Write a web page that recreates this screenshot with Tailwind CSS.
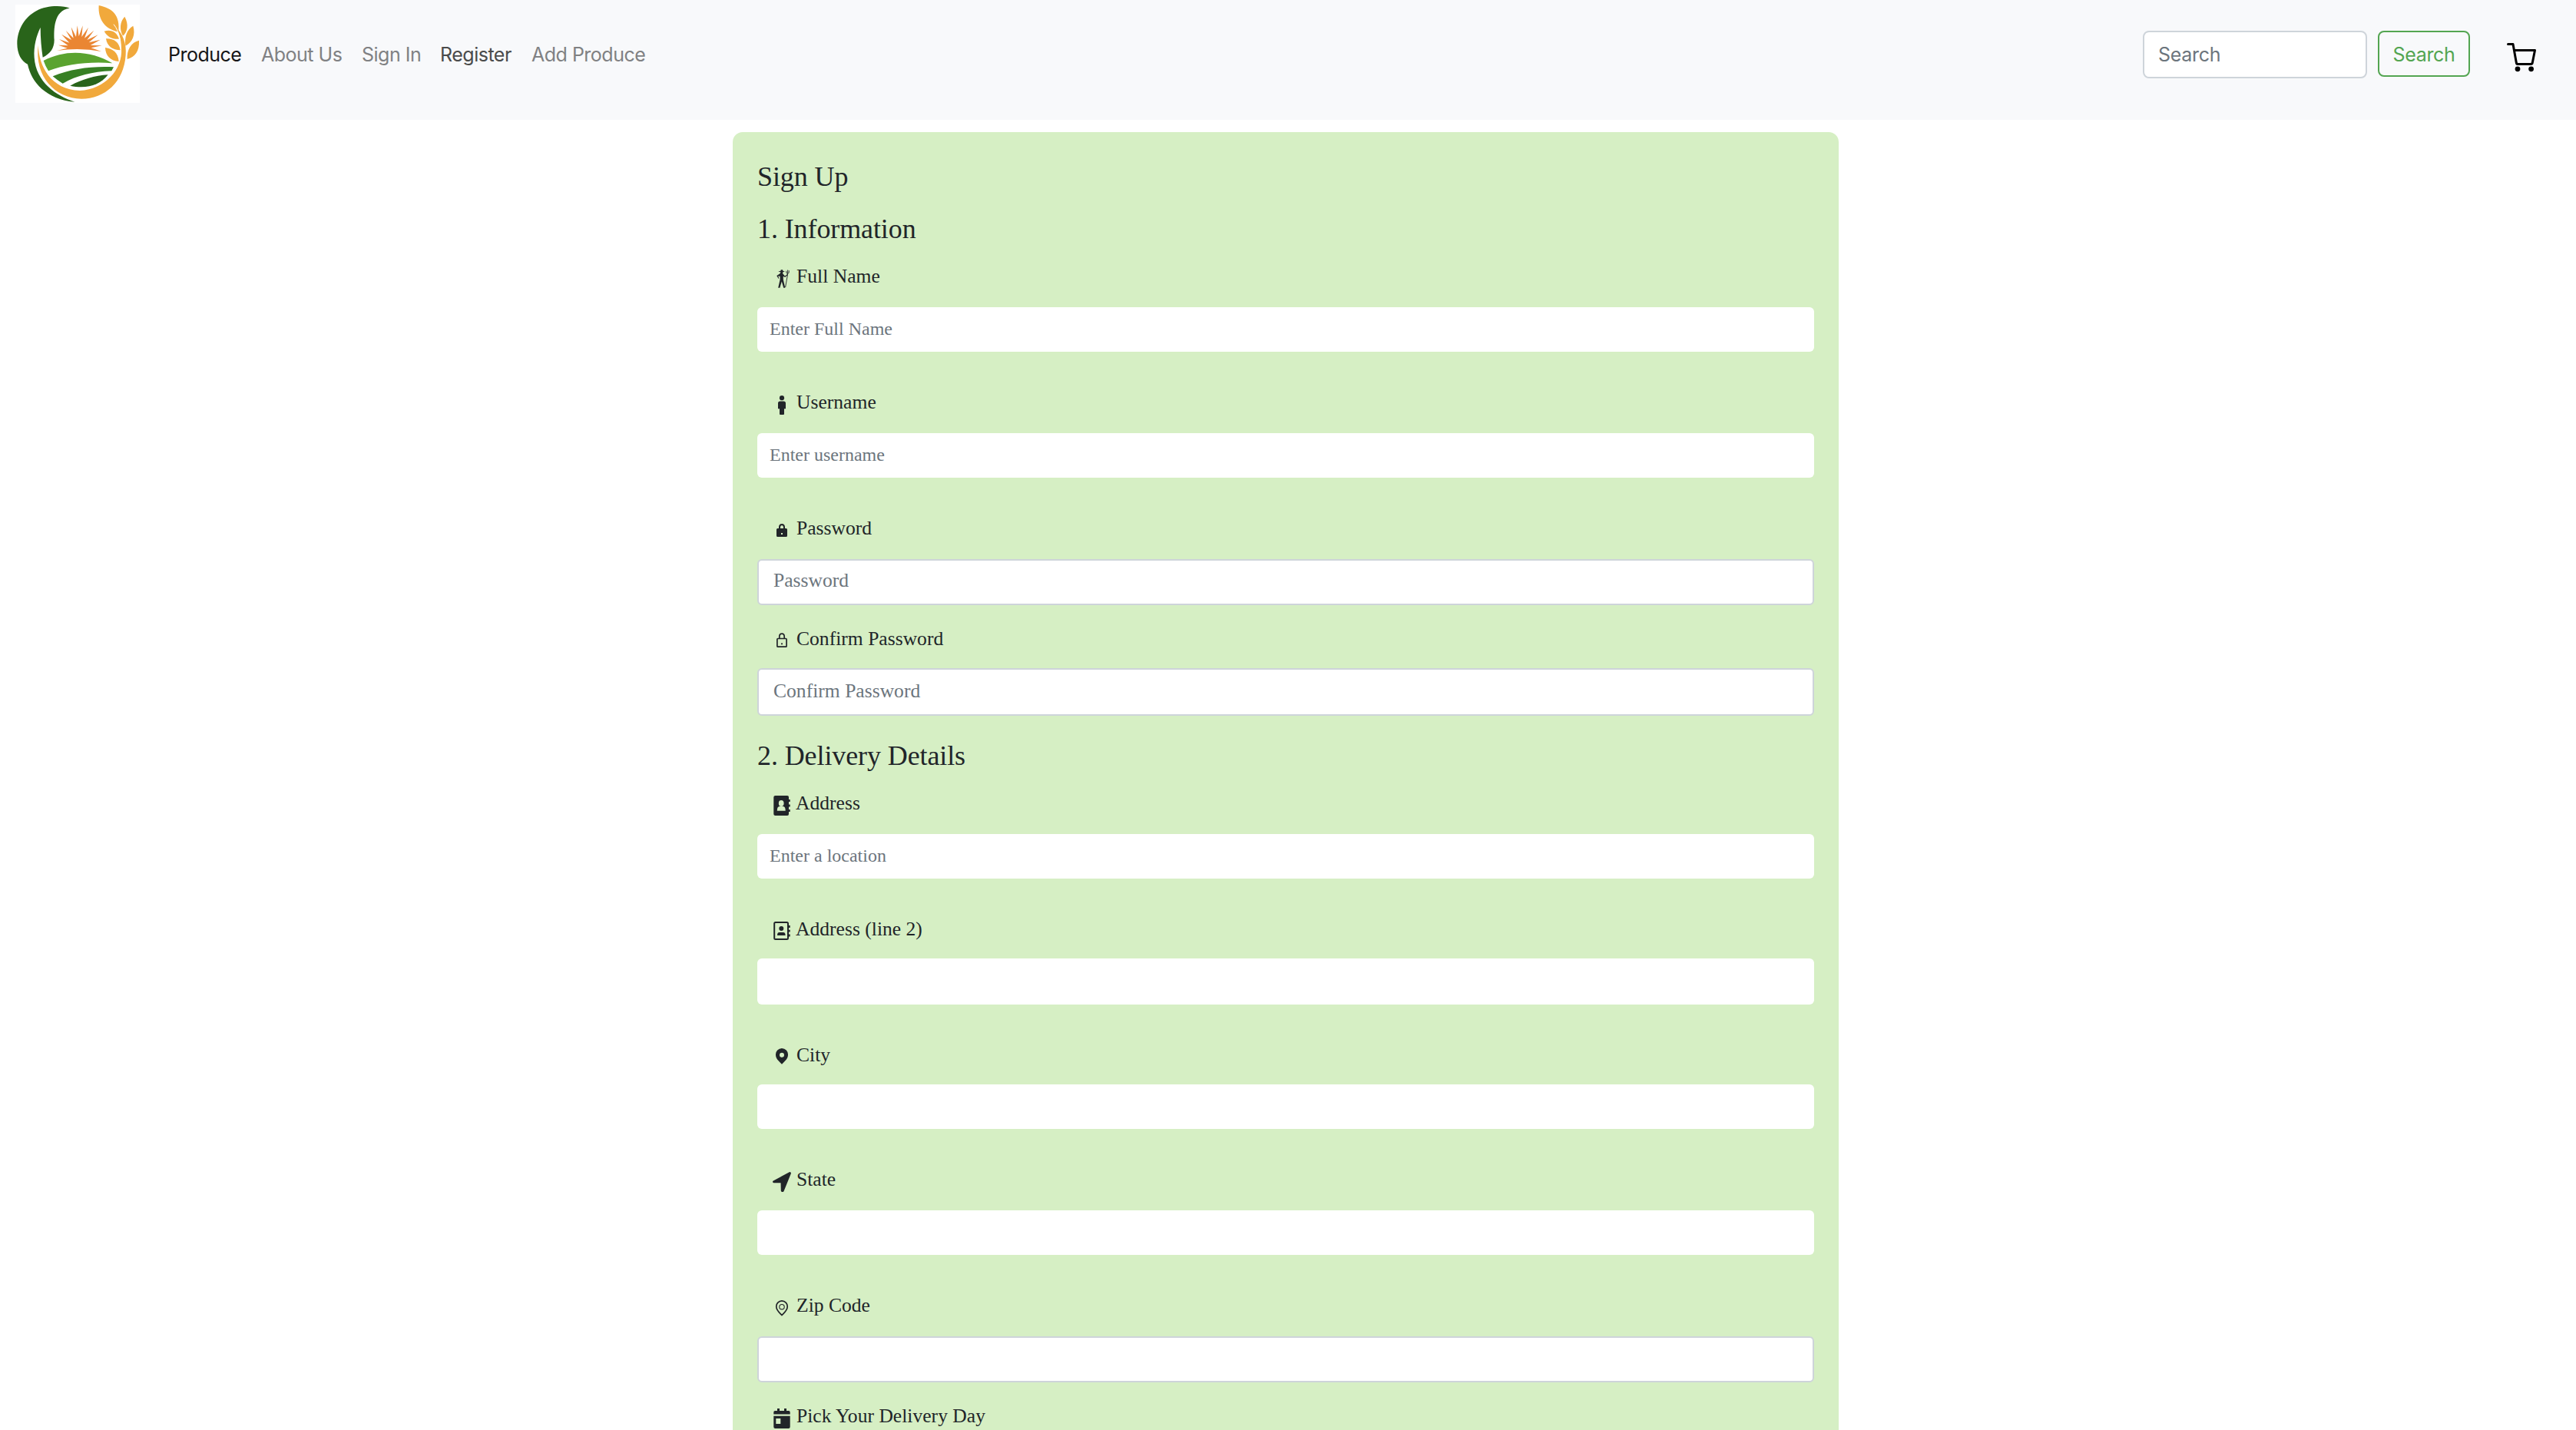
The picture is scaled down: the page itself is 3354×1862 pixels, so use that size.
<!DOCTYPE html>
<html lang="en">
<head>
<meta charset="utf-8">
<title>Sign Up</title>
<script src="https://cdn.jsdelivr.net/npm/@tailwindcss/browser@4"></script>
</head>
<body class="bg-white text-[#212529] w-[3354px] h-[1862px] overflow-hidden">
<header class="h-[156px] bg-[#f8f9fb] flex items-start pl-5 font-[Inter,sans-serif] text-[25px] leading-[38px] tracking-[-0.5px]">
  <svg class="w-[162px] h-[128px] mt-[6px] shrink-0" viewBox="60 18 486 384">
    <rect x="60" y="18" width="486" height="384" fill="#fff"/>
    <path fill="#29641a" d="M272 32C246 20 180 20 143 42C100 65 68 110 67 170C67 210 84 240 108 251C122 320 180 388 292 398C220 375 140 320 134 225C131 180 142 140 158 107C158 150 162 190 167 224C195 210 212 190 212 155C211 120 208 40 272 32Z"/>
    <path fill="#f1a93c" d="M149 176C152 260 200 350 312 354C410 350 480 270 474 190C474 150 462 120 448 101C480 130 495 170 491 215C484 320 410 386 318 386C215 384 135 300 149 176Z"/>
    <path fill="#f1a93c" d="M386 21C440 32 470 60 463 124C410 115 382 75 386 21ZM487 65C504 95 498 125 480 140C466 115 468 85 487 65ZM520 101C530 135 518 165 490 179C486 145 495 115 520 101ZM543 158C545 200 528 222 497 231C495 195 512 165 543 158ZM407 122C435 114 456 125 465 152C440 154 420 145 407 122ZM414 151C445 150 466 165 470 196C440 196 418 180 414 151ZM411 186C440 190 462 205 464 240C432 238 412 218 411 186Z"/>
    <path fill="none" stroke="#fff" stroke-width="3" d="M444 95Q462 115 470 160"/>
    <path fill="#ea8633" d="M222 198L263 188L228 176L266 178L231 153L271 167L240 134L279 156L257 119L287 149L278 106L297 144L302 100L308 142L323 100L319 144L345 107L330 149L367 119L340 156L383 136L347 166L392 155L353 177L398 178L356 187L396 201Q310 184 222 198Z"/>
    <path fill="#5aa32f" d="M170 237C260 190 360 200 439 247C350 240 260 250 189 277Q178 260 170 237Z"/>
    <path fill="#377f24" d="M206 298C280 268 360 258 444 262L436 277C360 280 300 295 245 326Q224 314 206 298Z"/>
    <path fill="#29641a" d="M274 335C320 310 370 295 422 292C390 335 335 348 274 335Z"/>
  </svg>
  <nav class="flex mt-[52px] ml-[37px] text-[#808183] whitespace-nowrap">
    <a class="w-[121px] text-[#161617]">Produce</a>
    <a class="w-[131px]">About Us</a>
    <a class="w-[102px]">Sign In</a>
    <a class="w-[119px] text-[#4a4b4b]">Register</a>
    <a>Add Produce</a>
  </nav>
  <form class="ml-auto flex items-start mt-10 mr-[51px]">
    <div class="w-[292px] h-[62px] bg-white border-2 border-[#ced4da] rounded-lg pl-[18px] pt-[11px] leading-[36px] tracking-[-0.3px] text-[#6c757d]">Search</div>
    <div class="ml-[14px] w-[120px] h-[60px] border-2 border-[#53a551] rounded-lg text-center text-[#53a551] pt-[11px] leading-[36px] tracking-[-0.3px]">Search</div>
    <svg class="ml-[47px] mt-[15px] w-10 h-10" viewBox="0 0 40 40" fill="none" stroke="#000" stroke-width="3" stroke-linecap="round" stroke-linejoin="round"><path d="M2.5 2.5H9L13.3 26.500Q13.500 28.500 15.500 28.500H32Q34 28.500 34.300 26.500L37.500 10.500H11"/><g fill="#000" stroke="none"><circle cx="15" cy="34.8" r="3.4"/><circle cx="32.6" cy="34.8" r="3.4"/></g></svg>
  </form>
</header>
<main class="mt-4 ml-[954px] w-[1440px] h-[1700px] bg-[#d6efc4] rounded-t-[13px] px-8 pt-9 flex flex-col font-['Liberation_Serif',serif] text-[25.6px]">
  <h1 class="text-[36px] leading-[44px] tracking-[-0.1px]">Sign Up</h1>
  <h2 class="mt-6 text-[36px] leading-[44px] tracking-[-0.1px]">1. Information</h2>

  <label class="mt-5 h-10 leading-10 flex pl-[19px] gap-[6px]"><svg class="w-[26px] h-7 mt-[10px]" viewBox="0 0 26 28" fill="#212529"><path d="M8.300 3.400L11.300 2.800L11.800 1.300H14L14.500 2.800L17 3.500L14.500 4.200L14 6L17 9.400L20 7L20.600 8L17.200 11L14.800 9.700V14L17.300 24.700H15.200L12.800 16.500L10.400 24.700H8.200L10.600 14V9.800L8.200 9.500L9.300 12.500L8.500 12.800L6.300 9L10.200 6.500L11.600 4.400Z"/><path d="M20.600 7L17.600 24M18.700 2.800L19 5.500L20.800 6.500L22.200 5V2.200M20.600 1.500V7" stroke="#212529" stroke-width="0.900" fill="none"/></svg>Full Name</label>
  <div class="mt-5 h-[58px] bg-white rounded-md pl-4 text-2xl leading-[56px] text-[#6c757d]">Enter Full Name</div>

  <label class="mt-[46px] h-10 leading-10 flex pl-[19px] gap-[6px]"><svg class="w-[26px] h-7 mt-[10px]" viewBox="0 0 26 28" fill="#212529"><circle cx="13" cy="4.200" r="3.100"/><path d="M10.500 8.500H15.500Q18 8.500 18 11V18.300H16V25Q16 26 15 26H11Q10 26 10 25V18.300H8V11Q8 8.500 10.500 8.500Z"/></svg>Username</label>
  <div class="mt-5 h-[58px] bg-white rounded-md pl-4 text-2xl leading-[56px] text-[#6c757d]">Enter username</div>

  <label class="mt-[46px] h-10 leading-10 flex pl-[19px] gap-[6px]"><svg class="w-[26px] h-7 mt-[10px]" viewBox="0 0 26 28" fill="#212529"><path d="M10 11V8.500Q10 5 13 5T16 8.500V11" fill="none" stroke="#212529" stroke-width="2"/><path fill-rule="evenodd" d="M7.500 10H18.500Q20 10 20 11.500V19.500Q20 21 18.500 21H7.500Q6 21 6 19.500V11.500Q6 10 7.500 10ZM12 16V18H14V16Z"/></svg>Password</label>
  <div class="mt-5 h-[60px] bg-white border-2 border-[#ced4da] rounded-md pl-[19px] leading-[52px] text-[#6c757d]">Password</div>

  <label class="mt-6 h-10 leading-10 flex pl-[19px] gap-[6px]"><svg class="w-[26px] h-7 mt-[10px]" viewBox="0 0 26 28" fill="none" stroke="#212529" stroke-width="1.700"><path d="M9.800 10V7Q9.800 3.200 13 3.200T16.200 7V10"/><rect x="6.900" y="9.500" width="12.200" height="10.700" rx="1"/><circle cx="13" cy="16.300" r="1.100" fill="#212529" stroke="none"/></svg>Confirm Password</label>
  <div class="mt-[18px] h-[62px] bg-white border-2 border-[#ced4da] rounded-md pl-[19px] leading-[56px] text-[#6c757d]">Confirm Password</div>

  <h2 class="mt-[30px] text-[36px] leading-[44px] tracking-[-0.1px]">2. Delivery Details</h2>

  <label class="mt-5 h-10 leading-10 flex pl-[19px] gap-[5px]"><svg class="w-[26px] h-7 mt-[10px]" viewBox="0 0 26 28" fill="#212529"><path d="M4.500 0H20Q22 0 22 2V24Q22 26 20 26H4.500Q2.300 26 2.300 24V2Q2.300 0 4.500 0ZM21 5H23.700V8H21ZM21 11.500H23.700V14.500H21ZM21 18H23.700V21H21Z"/><g fill="#d6efc4"><ellipse cx="12.200" cy="10" rx="3.400" ry="4"/><path d="M6.800 19.700Q6.800 14.200 9.800 14H14.800Q17.700 14.200 17.700 19.700Z"/></g></svg>Address</label>
  <div class="mt-5 h-[58px] bg-white rounded-md pl-4 text-2xl leading-[56px] text-[#6c757d]">Enter a location</div>

  <label class="mt-[46px] h-10 leading-10 flex pl-[19px] gap-[5px]"><svg class="w-[26px] h-7 mt-[10px]" viewBox="0 0 26 28" fill="#212529"><rect x="3.200" y="1" width="17.800" height="22" rx="1.500" fill="none" stroke="#212529" stroke-width="2"/><path d="M21 5H23.700V8H21ZM21 10.800H23.700V13.500H21ZM21 16.500H23.700V19.500H21ZM7 18Q7 14 9.500 14H15Q17.600 14 17.600 18Z"/><circle cx="12.300" cy="9" r="3"/></svg>Address (line 2)</label>
  <div class="mt-[18px] h-[60px] bg-white rounded-md"></div>

  <label class="mt-[46px] h-10 leading-10 flex pl-[19px] gap-[6px]"><svg class="w-[26px] h-7 mt-[10px]" viewBox="0 0 26 28" fill="#212529"><path fill-rule="evenodd" d="M13 1A8 8 0 0 1 21 9.500C21 14.500 17 17.500 13 21.700C9 17.500 5 14.500 5 9.500A8 8 0 0 1 13 1ZM13 6.800A3 3 0 1 0 13 12.800A3 3 0 1 0 13 6.800Z"/></svg>City</label>
  <div class="mt-[18px] h-[58px] bg-white rounded-md"></div>

  <label class="mt-[46px] h-10 leading-10 flex pl-[19px] gap-[6px]"><svg class="w-[26px] h-7 mt-[10px]" viewBox="0 0 26 28" fill="#212529" stroke="#212529" stroke-width="3" stroke-linejoin="round"><path d="M23.400 1.600L2.600 12.800H13L13.300 24.500H14.200Z"/></svg>State</label>
  <div class="mt-5 h-[58px] bg-white rounded-md"></div>

  <label class="mt-[46px] h-10 leading-10 flex pl-[19px] gap-[6px]"><svg class="w-[26px] h-7 mt-[10px]" viewBox="0 0 26 28" fill="none" stroke="#212529" stroke-width="1.700"><path d="M13 3.900A7.200 7.200 0 0 1 20.200 11.500C20.200 16 17 18.500 13 22.500C9 18.500 5.800 16 5.800 11.500A7.200 7.200 0 0 1 13 3.900Z"/><circle cx="13" cy="11.700" r="3.200" stroke-width="1.100"/></svg>Zip Code</label>
  <div class="mt-5 h-[60px] bg-white border-2 border-[#ced4da] rounded-md"></div>

  <label class="mt-6 h-10 leading-10 flex pl-[19px] gap-[6px]"><svg class="w-[26px] h-7 mt-[10px]" viewBox="0 0 26 28" fill="#212529"><path fill-rule="evenodd" d="M7 0H10V3H16V0H19V3H22Q23.700 3 23.700 5V7.500H2.300V5Q2.300 3 4 3H7ZM2.300 9.700H23.700V24Q23.700 26 21.700 26H4.300Q2.300 26 2.300 24ZM5.300 13V20H11.300V13Z"/></svg>Pick Your Delivery Day</label>
</main>
</body>
</html>
